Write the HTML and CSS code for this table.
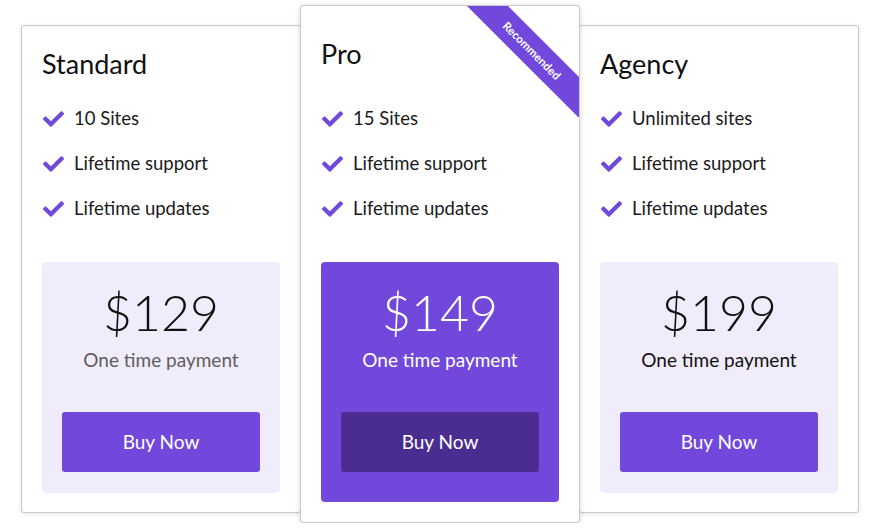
FILE: index.html
```html
<!DOCTYPE html>
<html lang="en">
<head>
<meta charset="utf-8">
<title>Pricing</title>
<link rel="stylesheet" href="styles.css">
</head>
<body>
<div class="plans">
  <div class="card side">
    <h2 class="title">Standard</h2>
    <ul class="features">
      <li><svg class="check" viewBox="0 60 512 390"><path d="M173.9 439.4l-166.4-166.4c-10-10-10-26.2 0-36.2l36.2-36.2c10-10 26.2-10 36.2 0L192 312.7 432.1 72.6c10-10 26.2-10 36.2 0l36.2 36.2c10 10 10 26.2 0 36.2l-294.4 294.4c-10 10-26.2 10-36.2 0z"/></svg>10 Sites</li>
      <li><svg class="check" viewBox="0 60 512 390"><path d="M173.9 439.4l-166.4-166.4c-10-10-10-26.2 0-36.2l36.2-36.2c10-10 26.2-10 36.2 0L192 312.7 432.1 72.6c10-10 26.2-10 36.2 0l36.2 36.2c10 10 10 26.2 0 36.2l-294.4 294.4c-10 10-26.2 10-36.2 0z"/></svg>Lifetime support</li>
      <li><svg class="check" viewBox="0 60 512 390"><path d="M173.9 439.4l-166.4-166.4c-10-10-10-26.2 0-36.2l36.2-36.2c10-10 26.2-10 36.2 0L192 312.7 432.1 72.6c10-10 26.2-10 36.2 0l36.2 36.2c10 10 10 26.2 0 36.2l-294.4 294.4c-10 10-26.2 10-36.2 0z"/></svg>Lifetime updates</li>
    </ul>
    <div class="price-box">
      <div class="price">$129</div>
      <div class="note muted">One time payment</div>
      <a class="buy" href="#">Buy Now</a>
    </div>
  </div>

  <div class="card featured">
    <div class="ribbon">Recommended</div>
    <h2 class="title">Pro</h2>
    <ul class="features">
      <li><svg class="check" viewBox="0 60 512 390"><path d="M173.9 439.4l-166.4-166.4c-10-10-10-26.2 0-36.2l36.2-36.2c10-10 26.2-10 36.2 0L192 312.7 432.1 72.6c10-10 26.2-10 36.2 0l36.2 36.2c10 10 10 26.2 0 36.2l-294.4 294.4c-10 10-26.2 10-36.2 0z"/></svg>15 Sites</li>
      <li><svg class="check" viewBox="0 60 512 390"><path d="M173.9 439.4l-166.4-166.4c-10-10-10-26.2 0-36.2l36.2-36.2c10-10 26.2-10 36.2 0L192 312.7 432.1 72.6c10-10 26.2-10 36.2 0l36.2 36.2c10 10 10 26.2 0 36.2l-294.4 294.4c-10 10-26.2 10-36.2 0z"/></svg>Lifetime support</li>
      <li><svg class="check" viewBox="0 60 512 390"><path d="M173.9 439.4l-166.4-166.4c-10-10-10-26.2 0-36.2l36.2-36.2c10-10 26.2-10 36.2 0L192 312.7 432.1 72.6c10-10 26.2-10 36.2 0l36.2 36.2c10 10 10 26.2 0 36.2l-294.4 294.4c-10 10-26.2 10-36.2 0z"/></svg>Lifetime updates</li>
    </ul>
    <div class="price-box">
      <div class="price">$149</div>
      <div class="note">One time payment</div>
      <a class="buy" href="#">Buy Now</a>
    </div>
  </div>

  <div class="card side">
    <h2 class="title">Agency</h2>
    <ul class="features">
      <li><svg class="check" viewBox="0 60 512 390"><path d="M173.9 439.4l-166.4-166.4c-10-10-10-26.2 0-36.2l36.2-36.2c10-10 26.2-10 36.2 0L192 312.7 432.1 72.6c10-10 26.2-10 36.2 0l36.2 36.2c10 10 10 26.2 0 36.2l-294.4 294.4c-10 10-26.2 10-36.2 0z"/></svg>Unlimited sites</li>
      <li><svg class="check" viewBox="0 60 512 390"><path d="M173.9 439.4l-166.4-166.4c-10-10-10-26.2 0-36.2l36.2-36.2c10-10 26.2-10 36.2 0L192 312.7 432.1 72.6c10-10 26.2-10 36.2 0l36.2 36.2c10 10 10 26.2 0 36.2l-294.4 294.4c-10 10-26.2 10-36.2 0z"/></svg>Lifetime support</li>
      <li><svg class="check" viewBox="0 60 512 390"><path d="M173.9 439.4l-166.4-166.4c-10-10-10-26.2 0-36.2l36.2-36.2c10-10 26.2-10 36.2 0L192 312.7 432.1 72.6c10-10 26.2-10 36.2 0l36.2 36.2c10 10 10 26.2 0 36.2l-294.4 294.4c-10 10-26.2 10-36.2 0z"/></svg>Lifetime updates</li>
    </ul>
    <div class="price-box">
      <div class="price">$199</div>
      <div class="note">One time payment</div>
      <a class="buy" href="#">Buy Now</a>
    </div>
  </div>
</div>
</body>
</html>
```
FILE: styles.css
```css
* { box-sizing: border-box; }
html, body { margin: 0; padding: 0; background: #fff; }
body {
  font-family: "Lato", "Noto Sans", sans-serif;
  color: #111;
}
.plans {
  display: flex;
  align-items: flex-start;
  padding: 5px 0 0 21px;
}
.card {
  width: 280px;
  background: #fff;
  border: 1px solid #c8c8c8;
  border-radius: 3px;
  box-shadow: 0 1px 4px rgba(0,0,0,0.10);
  padding: 20px 20px 19px;
}
.card + .card { margin-left: -1px; }
.side { margin-top: 20px; }
.featured {
  position: relative;
  z-index: 2;
  overflow: hidden;
  padding-top: 30px;
  padding-bottom: 20px;
  box-shadow: 0 1px 6px rgba(0,0,0,0.14);
}
.title {
  margin: 0 0 23px;
  font-size: 27px;
  line-height: 36px;
  font-weight: 400;
  color: #111;
}
.featured .title { margin-bottom: 33px; }
.features {
  list-style: none;
  margin: 0 0 40px;
  padding: 0;
  display: flex;
  flex-direction: column;
  gap: 18px;
}
.features li {
  display: flex;
  align-items: center;
  gap: 10px;
  font-size: 18.5px;
  line-height: 27px;
  color: #1a1a1a;
}
.check {
  width: 21px;
  height: 16px;
  fill: #7048db;
  flex: none;
  margin-left: 1px;
}
.price-box {
  background: #f1ecfb;
  border-radius: 4px;
  padding: 20px 20px 21px;
  text-align: center;
}
.featured .price-box {
  background: #7148db;
  padding-bottom: 30px;
  color: #fff;
}
.price {
  font-size: 50px;
  line-height: 60px;
  font-weight: 300;
  color: #111;
}
.note {
  margin-top: 6px;
  font-size: 19px;
  line-height: 24px;
  color: #111;
}
.note.muted { color: #5e5e5e; }
.featured .price, .featured .note { color: #fff; }
.buy {
  display: block;
  margin-top: 40px;
  height: 60px;
  line-height: 60px;
  border-radius: 3px;
  background: #7148db;
  color: #fff;
  font-size: 19px;
  text-decoration: none;
}
.featured .buy { background: #4b2d92; }
.ribbon {
  position: absolute;
  left: 151px;
  top: 30px;
  width: 160px;
  height: 29px;
  line-height: 29px;
  transform: rotate(45deg);
  background: #7148db;
  color: #fff;
  font-size: 11.5px;
  font-weight: 700;
  text-align: center;
}
```
